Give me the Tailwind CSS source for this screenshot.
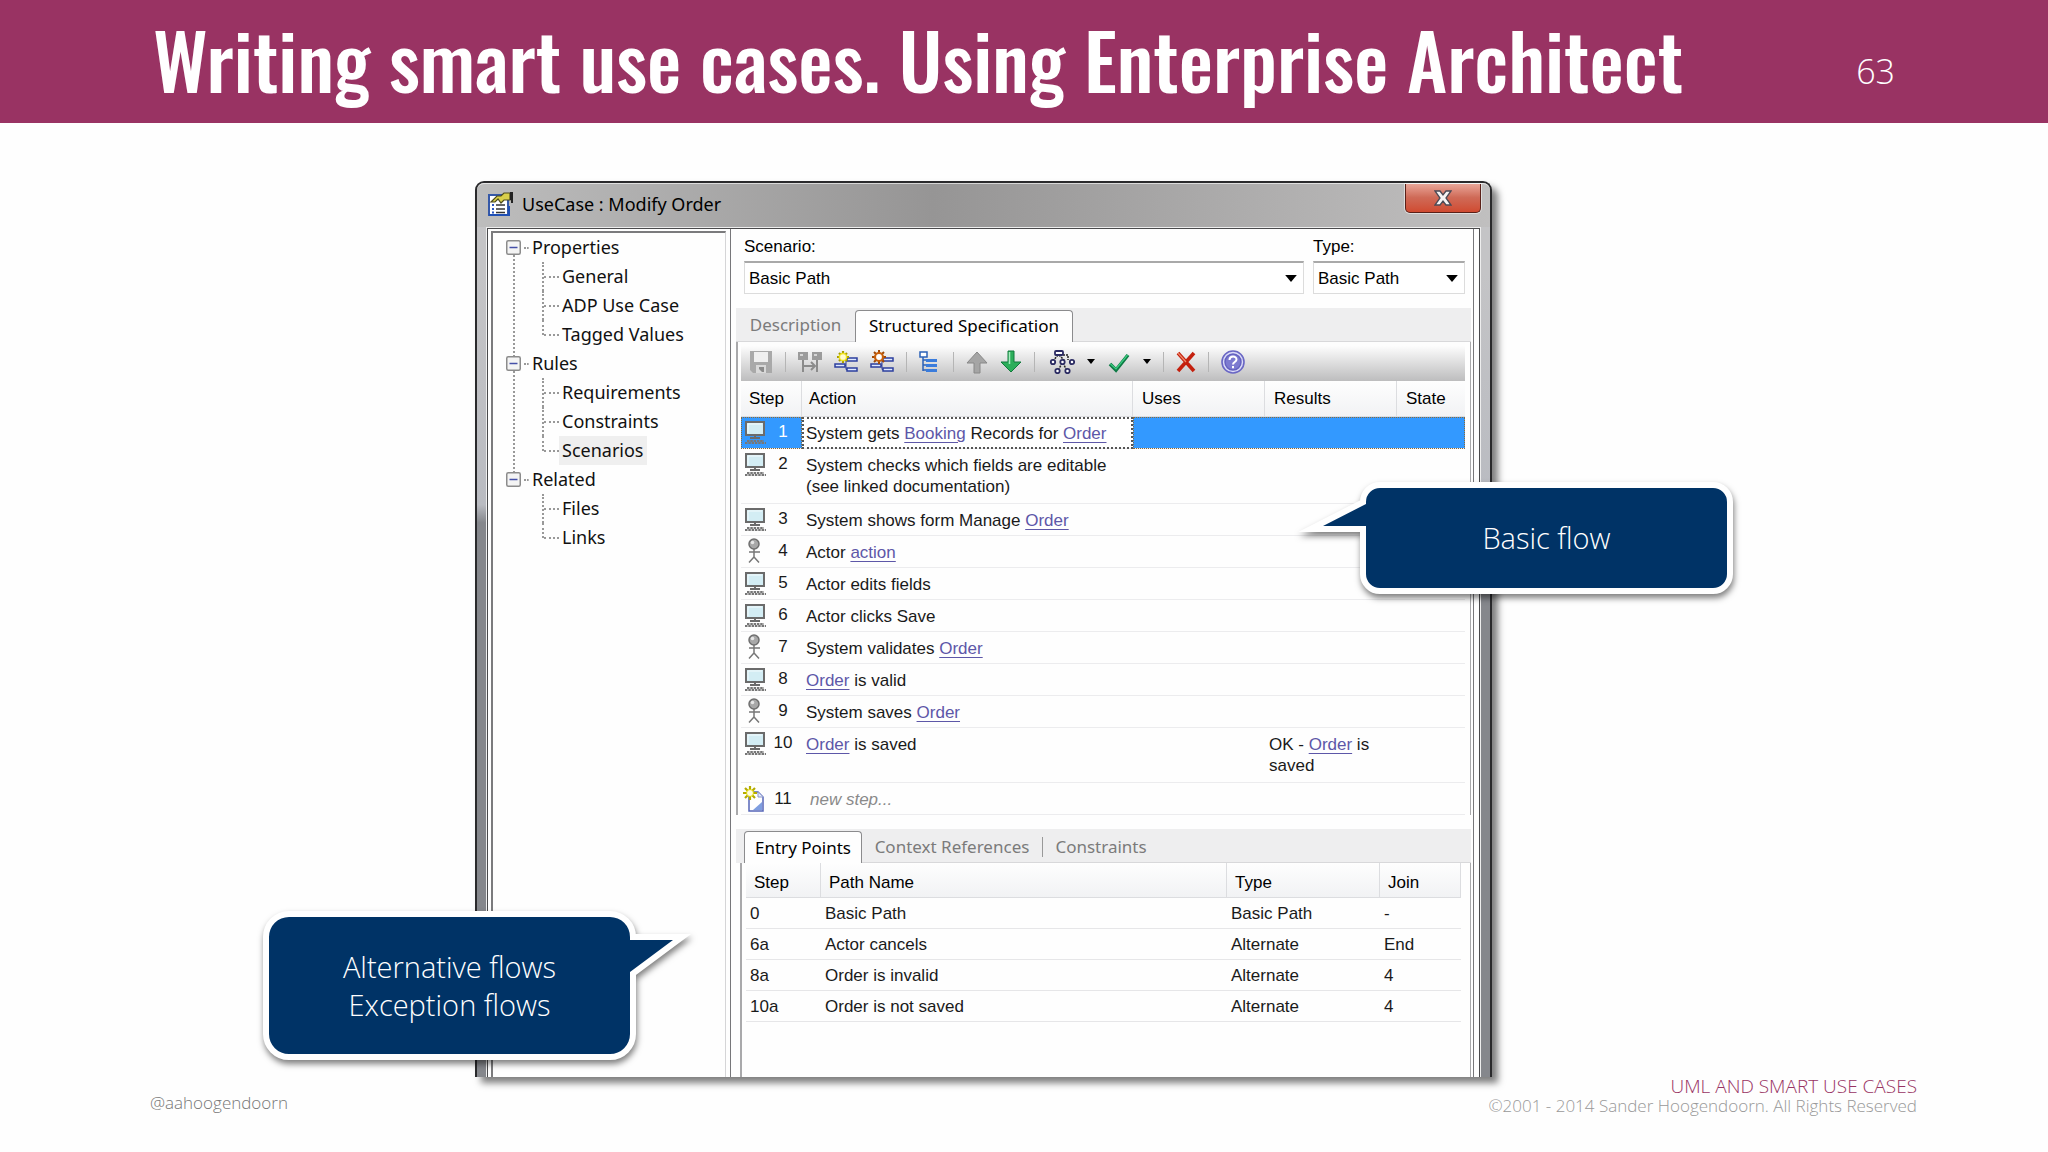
<!DOCTYPE html>
<html lang="en">
<head>
<meta charset="utf-8">
<title>Writing smart use cases. Using Enterprise Architect</title>
<script src="https://cdn.jsdelivr.net/npm/@tailwindcss/browser@4"></script>
</head>
<body class="min-h-screen flex flex-col bg-[#fefefe] overflow-x-hidden">

<!-- Shared icons -->
<svg class="hidden">
  <symbol id="pc" viewBox="0 0 22 23">
    <rect x="2" y="1" width="18" height="13" fill="#d3edf4" stroke="#6b6b6b" stroke-width="2"/>
    <path d="M4 12V3H18" fill="none" stroke="#f4fbfd"/>
    <path d="M11 15v2M6 17h10" stroke="#6b6b6b" stroke-width="2"/>
    <path d="M3 20h17M1 22h21" stroke="#777" stroke-width="1.800" stroke-dasharray="2.500 .8"/>
  </symbol>
  <symbol id="actor" viewBox="0 0 22 25">
    <path d="M10 11v8L5 24.500M10 19l5 5.500M5 14h11" fill="none" stroke="#777" stroke-width="1.500"/>
    <circle cx="10" cy="6" r="5" fill="#a8a8a8" stroke="#6f6f6f" stroke-width="1.500"/>
    <circle cx="8.500" cy="4.500" r="1.800" fill="#e6e6e6"/>
  </symbol>
  <symbol id="down" viewBox="0 0 10 6"><path d="M0 0h10L5 6z" fill="#000"/></symbol>
  <symbol id="plusminus" viewBox="0 0 15 15">
    <rect x=".75" y=".75" width="13.500" height="13.500" rx="1.500" fill="#f4f4f4" stroke="#8c8c8c" stroke-width="1.500"/>
    <path d="M3.500 7.500h8" stroke="#4550a8" stroke-width="1.500"/>
  </symbol>
</svg>

<header class="flex items-center justify-between bg-[#993363] h-[123px] pl-[153px] pr-[153px] text-white">
  <h1 class="pb-2 text-[77px] leading-[90px] font-medium whitespace-nowrap font-['Oswald','Roboto_Condensed','Open_Sans_Condensed','Liberation_Sans_Narrow','Open_Sans',sans-serif]">Writing smart use cases. Using Enterprise Architect</h1>
  <span class="pt-5 text-[34px] font-light font-['Open_Sans',sans-serif]">63</span>
</header>

<main class="grow grid grid-cols-[475fr_1017fr_556fr] pt-[58px] font-['Liberation_Sans',Arial,sans-serif] text-[17px] leading-[21px] text-[#1a1a1a]">
  <div class="col-start-2 relative flex flex-col border-2 border-b-0 border-[#2a2a2c] rounded-t-[9px] shadow-[6px_6px_7px_rgba(0,0,0,0.5)] bg-linear-to-b from-[#c4c4c6] from-10% via-[#b9bbc1] via-36% to-[#85878c] to-38%">

    <!-- Title bar -->
    <div class="flex items-start justify-between h-[44px] shrink-0 rounded-t-[7px] border-t border-white/60 bg-linear-to-r from-[#bdbdbd] via-[#969595] via-45% to-[#c0bfbf]">
      <div class="flex items-center gap-2 pl-[11px] pt-[8px]">
        <svg class="w-[26px] h-[24px]" viewBox="0 0 26 24">
          <rect x="1" y="3" width="19" height="20" fill="#fff" stroke="#3558a8" stroke-width="2"/>
          <path d="M1 23h20V14" fill="none" stroke="#1f4fb4" stroke-width="2"/>
          <path d="M4 13h2M4 17h2M4 20.500h2" stroke="#2b56c0" stroke-width="2"/>
          <path d="M8 13h9M8 17h9M8 20.500h9" stroke="#333" stroke-width="1.500"/>
          <path d="M3 10l6-6h4l3-3h6v7h-6l-3 3-3-4-3 3z" fill="#d9cf4a" stroke="#4d4a1a" stroke-width="1.200"/>
          <path d="M22 0h3v11h-2V8h-1z" fill="#222"/>
        </svg>
        <span class="text-[18px] leading-6 text-black font-['Noto_Sans','Open_Sans',sans-serif]">UseCase : Modify Order</span>
      </div>
      <button aria-label="Close" class="mr-[9px] w-[76px] h-[29px] flex items-center justify-center rounded-b-[5px] border border-t-0 border-[#5a2018] shadow-[0_0_0_1px_rgba(255,255,255,0.5)] bg-linear-to-b from-[#e8a598] via-[#cf6a57] via-48% to-[#d04a30]">
        <svg class="w-[18px] h-[16px]" viewBox="0 0 18 16"><path d="M1 1h5l3 4 3-4h5l-5 7 5 7h-5l-3-4-3 4H1l5-7z" fill="#f6f4f4" stroke="#4c4a55" stroke-width="1.300"/></svg>
      </button>
    </div>

    <!-- Client area -->
    <div class="grow mx-[9px] border border-b-0 border-[#eee]">
      <div class="h-full flex border border-b-0 border-[#4a4a4c] bg-[#fefefe] pl-[3px]">

        <nav class="w-[235px] mr-[2px] shrink-0 mt-0.5 border-l-2 border-t-2 border-r border-[#7b7b7d] border-r-[#d5d5d7] text-[18px] leading-[29px] text-[#111] font-['Noto_Sans','Open_Sans',sans-serif]">
          <ul class="relative pl-[13px]">
            <li aria-hidden="true" class="absolute left-[20px] top-[22px] h-[218px] border-l-2 border-dotted border-[#999]"></li>
            <li class="relative">
              <div class="flex items-center gap-[3px]"><svg class="w-[15px] h-[15px]"><use href="#plusminus"/></svg><span class="w-[5px] border-t-2 border-dotted border-[#999]"></span><span>Properties</span></div>
              <ul class="pl-[36px]">
                <li class="flex items-stretch"><span class="w-px border-l-2 border-dotted border-[#999]"></span><span class="w-[15px] self-center border-t-2 border-dotted border-[#999]"></span><span class="px-[3px]">General</span></li>
                <li class="flex items-stretch"><span class="w-px border-l-2 border-dotted border-[#999]"></span><span class="w-[15px] self-center border-t-2 border-dotted border-[#999]"></span><span class="px-[3px]">ADP Use Case</span></li>
                <li class="flex items-stretch"><span class="w-px h-[15px] border-l-2 border-dotted border-[#999]"></span><span class="w-[15px] self-center border-t-2 border-dotted border-[#999]"></span><span class="px-[3px]">Tagged Values</span></li>
              </ul>
            </li>
            <li class="relative">
              <div class="flex items-center gap-[3px]"><svg class="w-[15px] h-[15px]"><use href="#plusminus"/></svg><span class="w-[5px] border-t-2 border-dotted border-[#999]"></span><span>Rules</span></div>
              <ul class="pl-[36px]">
                <li class="flex items-stretch"><span class="w-px border-l-2 border-dotted border-[#999]"></span><span class="w-[15px] self-center border-t-2 border-dotted border-[#999]"></span><span class="px-[3px]">Requirements</span></li>
                <li class="flex items-stretch"><span class="w-px border-l-2 border-dotted border-[#999]"></span><span class="w-[15px] self-center border-t-2 border-dotted border-[#999]"></span><span class="px-[3px]">Constraints</span></li>
                <li class="flex items-stretch"><span class="w-px h-[15px] border-l-2 border-dotted border-[#999]"></span><span class="w-[15px] self-center border-t-2 border-dotted border-[#999]"></span><span class="px-[3px] bg-[#efefef]">Scenarios</span></li>
              </ul>
            </li>
            <li class="relative">
              <div class="flex items-center gap-[3px]"><svg class="w-[15px] h-[15px]"><use href="#plusminus"/></svg><span class="w-[5px] border-t-2 border-dotted border-[#999]"></span><span>Related</span></div>
              <ul class="pl-[36px]">
                <li class="flex items-stretch"><span class="w-px border-l-2 border-dotted border-[#999]"></span><span class="w-[15px] self-center border-t-2 border-dotted border-[#999]"></span><span class="px-[3px]">Files</span></li>
                <li class="flex items-stretch"><span class="w-px h-[15px] border-l-2 border-dotted border-[#999]"></span><span class="w-[15px] self-center border-t-2 border-dotted border-[#999]"></span><span class="px-[3px]">Links</span></li>
              </ul>
            </li>
          </ul>
        </nav>

        <section class="grow min-w-0 ml-[2px] mr-[5px] flex flex-col border-x border-[#77777a] pl-[5px] pr-[2px]">
          <div class="flex gap-[9px] pl-[8px] pr-[6px] pt-[7px] text-black">
            <div class="grow flex flex-col gap-[4px]">
              <label for="scenario">Scenario:</label>
              <div class="relative">
                <select id="scenario" class="appearance-none block w-full h-[33px] pl-[4px] border border-[#dcdcdc] border-t-2 border-t-[#a9a9a9] bg-white"><option>Basic Path</option></select>
                <svg class="absolute right-[7px] top-[14px] w-[12px] h-[7px] pointer-events-none"><use href="#down"/></svg>
              </div>
            </div>
            <div class="w-[152px] flex flex-col gap-[4px]">
              <label for="type">Type:</label>
              <div class="relative">
                <select id="type" class="appearance-none block w-full h-[33px] pl-[4px] border border-[#dcdcdc] border-t-2 border-t-[#a9a9a9] bg-white"><option>Basic Path</option></select>
                <svg class="absolute right-[7px] top-[14px] w-[12px] h-[7px] pointer-events-none"><use href="#down"/></svg>
              </div>
            </div>
          </div>

          <!-- Specification tabs -->
          <div class="mt-[14px] h-[34px] flex items-end bg-[#eeeeef] font-['Noto_Sans','Open_Sans',sans-serif] text-[17px]">
            <button class="h-full w-[119px] text-[#7b7b7b] border-b border-[#d8d8da]">Description</button>
            <button class="h-[32px] w-[218px] pb-0.5 rounded-t-[4px] border border-b-0 border-[#8b8b8d] bg-[#fefefe] text-black whitespace-nowrap">Structured Specification</button>
            <span class="grow border-b border-[#d8d8da]"></span>
          </div>

          <div class="border-l-2 border-r border-[#a9a9ab] pl-[3px] pr-[5px]">
            <div role="toolbar" class="flex items-center gap-3 h-[39px] pl-[8px] bg-linear-to-b from-[#fdfdfd] from-10% to-[#bdbdbe]">
              <button aria-label="Save"><svg class="w-6 h-6" viewBox="0 0 24 24"><path d="M1 1h22v22H4l-3-3z" fill="#a9a9a9"/><rect x="5" y="2" width="14" height="10" fill="#efefef"/><rect x="7" y="15" width="10" height="8" fill="#d9d9d9"/><path d="M10 17h5v5h-2l-3-3z" fill="#8b8b8b"/></svg></button>
              <span class="w-px h-5 bg-[#b5b5b5]"></span>
              <button aria-label="Split"><svg class="w-6 h-6" viewBox="0 0 24 24"><path d="M0 2h10v8H0zM14 2h10v8H14z" fill="#9b9b9b"/><path d="M2 4h3v2H2zM16 4h3v2h-3z" fill="#d5d5d5"/><path d="M5 10v12M19 10v12M5 16h12M13 12l4 4-4 4" fill="none" stroke="#8b8b8b" stroke-width="2"/></svg></button>
              <button aria-label="Insert step"><svg class="w-6 h-6" viewBox="0 0 24 24"><path d="M1 14h10v3H1zM13 8h10v3H13zM13 18h10v3H13z" fill="#dfe9ff" stroke="#2d3f9e" stroke-width="1.500"/><path d="M11 15.500h1v4h1M11 15.500h1v-6h1" fill="none" stroke="#2d3f9e"/><path d="M9 1v12M3 7h12M5 3l8 8M13 3l-8 8" stroke="#a89d00" stroke-width="2.200"/><circle cx="9" cy="7" r="3.600" fill="#fffbd0" stroke="#efe320" stroke-width="1.500"/></svg></button>
              <button aria-label="Edit step"><svg class="w-6 h-6" viewBox="0 0 24 24"><path d="M1 14h10v3H1zM13 8h10v3H13zM13 18h10v3H13z" fill="#dfe9ff" stroke="#2d3f9e" stroke-width="1.500"/><path d="M11 15.500h1v4h1M11 15.500h1v-6h1" fill="none" stroke="#2d3f9e"/><path d="M9 0v14M2 7h14M4 2l10 10M14 2L4 12" stroke="#a04a08" stroke-width="2"/><circle cx="9" cy="7" r="4" fill="#fff" stroke="#c8600c" stroke-width="2.200"/></svg></button>
              <span class="w-px h-5 bg-[#b5b5b5]"></span>
              <button aria-label="Outline"><svg class="w-[22px] h-6" viewBox="0 0 22 24"><path d="M4 7v14M4 10h3M4 15h3M4 20h3" fill="none" stroke="#2b62b8" stroke-width="1.500"/><rect x="1" y="2" width="7" height="5" fill="#fff" stroke="#2b62b8" stroke-width="1.500"/><path d="M7 9h11v3H7zM7 14h11v3H7zM7 19h11v3H7z" fill="#3a7cdc"/></svg></button>
              <span class="w-px h-5 bg-[#b5b5b5]"></span>
              <button aria-label="Move up"><svg class="w-[22px] h-6" viewBox="0 0 22 24"><path d="M11 2l10 11h-7v10H8V13H1z" fill="#a5a5a5" stroke="#888"/></svg></button>
              <button aria-label="Move down"><svg class="w-[22px] h-6" viewBox="0 0 22 24"><path d="M11 22L1 12h7V1h6v11h7z" fill="#2cae5a" stroke="#117a3c"/><path d="M9.500 2v12" stroke="#a8ecc0" stroke-width="1.500"/></svg></button>
              <span class="w-px h-5 bg-[#b5b5b5]"></span>
              <button aria-label="Structure"><svg class="w-[28px] h-6" viewBox="0 0 28 24"><path d="M12 5l6 6M11 5l-5 6M16 5h5v5M15 13l-4 8M16 13l4 8" fill="none" stroke="#222" stroke-width="1.500" stroke-dasharray="2 1"/><g fill="#fff" stroke="#2b2b62" stroke-width="1.800"><rect x="8" y="1" width="8" height="4" rx="1"/><circle cx="6" cy="12" r="2.200"/><circle cx="15.500" cy="12" r="2.200"/><circle cx="25" cy="12" r="2.200"/><circle cx="10.500" cy="21" r="2.200"/><circle cx="20.500" cy="21" r="2.200"/></g></svg></button>
              <svg class="w-2 h-[5px]"><use href="#down"/></svg>
              <button aria-label="Validate"><svg class="w-6 h-6" viewBox="0 0 24 24"><path d="M3 14l6 6L21 5" fill="none" stroke="#0e7a45" stroke-width="3.600"/><path d="M3.500 14l5.500 5L20.500 5" fill="none" stroke="#3ccf82" stroke-width="1.200"/></svg></button>
              <svg class="w-2 h-[5px]"><use href="#down"/></svg>
              <span class="w-px h-5 bg-[#b5b5b5]"></span>
              <button aria-label="Delete"><svg class="w-5 h-6" viewBox="0 0 20 24"><path d="M2 3l16 18M18 3L2 21" stroke="#c4200e" stroke-width="3.600"/><path d="M2 3l8 9" stroke="#f08a6a" stroke-width="1.200"/></svg></button>
              <span class="w-px h-5 bg-[#b5b5b5]"></span>
              <button aria-label="Help"><svg class="w-6 h-6" viewBox="0 0 24 24"><circle cx="12" cy="12" r="11" fill="#dcdcf8" stroke="#6a67c4" stroke-width="1.600"/><circle cx="12" cy="12" r="8" fill="#7d7bd0" stroke="#6462c0" stroke-width="1.500"/><path d="M8.500 10c0-4.500 7-4.500 7-.5 0 2.500-3.500 2.500-3.500 5M12 16v2.200" fill="none" stroke="#fff" stroke-width="2"/></svg></button>
            </div>

            <table class="w-full table-fixed border-separate border-spacing-0 text-left">
              <thead>
                <tr class="h-[36px] text-black bg-linear-to-b from-[#fefefe] to-[#f1f2f4]">
                  <th class="w-[61px] pl-2 font-normal border-b border-r border-[#dcdde0]">Step</th>
                  <th class="pl-[7px] font-normal border-b border-r border-[#dcdde0]">Action</th>
                  <th class="w-[132px] pl-[9px] font-normal border-b border-r border-[#dcdde0]">Uses</th>
                  <th class="w-[132px] pl-[9px] font-normal border-b border-r border-[#dcdde0]">Results</th>
                  <th class="w-[68px] pl-[9px] font-normal border-b border-[#dcdde0]">State</th>
                </tr>
              </thead>
              <tbody class="align-top [&_a]:text-[#5d57a8] [&_a]:underline [&_a]:underline-offset-3 [&_td]:border-b [&_td]:border-[#ececee]">
                <tr class="h-[32px]">
                  <td class="bg-[#3399ff] pl-[3px] pt-[4px] outline-1 outline-dotted outline-[#8a6a3a] -outline-offset-1"><div class="flex items-start text-white"><svg class="w-[22px] h-[23px]"><use href="#pc"/></svg><span class="w-[34px] text-center">1</span></div></td>
                  <td class="pl-[4px] pt-[6px] outline-2 outline-dotted outline-[#555] -outline-offset-2 bg-white">System gets <a href="#booking">Booking</a> Records for <a href="#order">Order</a></td>
                  <td class="bg-[#3399ff] outline-1 outline-dotted outline-[#8a6a3a] -outline-offset-1" colspan="3"></td>
                </tr>
                <tr class="h-[55px]">
                  <td class="pl-[3px] pt-[4px]"><div class="flex items-start"><svg class="w-[22px] h-[23px]"><use href="#pc"/></svg><span class="w-[34px] text-center">2</span></div></td>
                  <td class="pl-[4px] pt-[6px]">System checks which fields are editable<br>(see linked documentation)</td><td></td><td></td><td></td>
                </tr>
                <tr class="h-[32px]">
                  <td class="pl-[3px] pt-[4px]"><div class="flex items-start"><svg class="w-[22px] h-[23px]"><use href="#pc"/></svg><span class="w-[34px] text-center">3</span></div></td>
                  <td class="pl-[4px] pt-[6px]">System shows form Manage <a href="#order">Order</a></td><td></td><td></td><td></td>
                </tr>
                <tr class="h-[32px]">
                  <td class="pl-[3px] pt-[2px]"><div class="flex items-start"><svg class="w-[22px] h-[25px]"><use href="#actor"/></svg><span class="w-[34px] pt-[2px] text-center">4</span></div></td>
                  <td class="pl-[4px] pt-[6px]">Actor <a href="#action">action</a></td><td></td><td></td><td></td>
                </tr>
                <tr class="h-[32px]">
                  <td class="pl-[3px] pt-[4px]"><div class="flex items-start"><svg class="w-[22px] h-[23px]"><use href="#pc"/></svg><span class="w-[34px] text-center">5</span></div></td>
                  <td class="pl-[4px] pt-[6px]">Actor edits fields</td><td></td><td></td><td></td>
                </tr>
                <tr class="h-[32px]">
                  <td class="pl-[3px] pt-[4px]"><div class="flex items-start"><svg class="w-[22px] h-[23px]"><use href="#pc"/></svg><span class="w-[34px] text-center">6</span></div></td>
                  <td class="pl-[4px] pt-[6px]">Actor clicks Save</td><td></td><td></td><td></td>
                </tr>
                <tr class="h-[32px]">
                  <td class="pl-[3px] pt-[2px]"><div class="flex items-start"><svg class="w-[22px] h-[25px]"><use href="#actor"/></svg><span class="w-[34px] pt-[2px] text-center">7</span></div></td>
                  <td class="pl-[4px] pt-[6px]">System validates <a href="#order">Order</a></td><td></td><td></td><td></td>
                </tr>
                <tr class="h-[32px]">
                  <td class="pl-[3px] pt-[4px]"><div class="flex items-start"><svg class="w-[22px] h-[23px]"><use href="#pc"/></svg><span class="w-[34px] text-center">8</span></div></td>
                  <td class="pl-[4px] pt-[6px]"><a href="#order">Order</a> is valid</td><td></td><td></td><td></td>
                </tr>
                <tr class="h-[32px]">
                  <td class="pl-[3px] pt-[2px]"><div class="flex items-start"><svg class="w-[22px] h-[25px]"><use href="#actor"/></svg><span class="w-[34px] pt-[2px] text-center">9</span></div></td>
                  <td class="pl-[4px] pt-[6px]">System saves <a href="#order">Order</a></td><td></td><td></td><td></td>
                </tr>
                <tr class="h-[55px]">
                  <td class="pl-[3px] pt-[4px]"><div class="flex items-start"><svg class="w-[22px] h-[23px]"><use href="#pc"/></svg><span class="w-[34px] text-center">10</span></div></td>
                  <td class="pl-[4px] pt-[6px]"><a href="#order">Order</a> is saved</td><td></td>
                  <td class="pl-[4px] pt-[6px]">OK - <a href="#order">Order</a> is<br>saved</td><td></td>
                </tr>
                <tr class="h-[32px]">
                  <td class="pl-[2px] pt-[3px]"><div class="flex items-start"><svg class="w-[23px] h-[26px]" viewBox="0 0 23 26"><path d="M6 6h9l5 5v14H6z" fill="#fff" stroke="#5566b8" stroke-width="1.500"/><path d="M19 16v8h-9z" fill="#7f9ee0"/><path d="M15 6v5h5" fill="#e6ebfa" stroke="#8a95c8"/><path d="M7 0v14M0 7h14M2 2l10 10M12 2L2 12" stroke="#b4ac00" stroke-width="2.200"/><circle cx="7" cy="7" r="3.500" fill="#fffde0" stroke="#ded600"/></svg><span class="w-[34px] pt-[2px] text-center">11</span></div></td>
                  <td class="pl-[8px] pt-[6px] italic text-[#8a8a8a]">new step...</td><td></td><td></td><td></td>
                </tr>
              </tbody>
            </table>
          </div>

          <!-- Entry point tabs -->
          <div class="mt-[14px] h-[34px] pl-[8px] flex items-end bg-[#eeeeef] font-['Noto_Sans','Open_Sans',sans-serif] text-[17px] text-[#7b7b7b]">
            <button class="h-[32px] w-[118px] rounded-t-[4px] border border-b-0 border-[#8b8b8d] bg-[#fefefe] text-black whitespace-nowrap">Entry Points</button>
            <div class="grow h-[32px] flex items-center border-b border-[#d8d8da]">
              <button class="w-[180px] whitespace-nowrap">Context References</button>
              <span class="w-px h-5 bg-[#999]"></span>
              <button class="w-[116px]">Constraints</button>
            </div>
          </div>
          <div class="grow ml-[4px] border-l-2 border-r border-[#a9a9ab] pl-[4px] pr-[9px] pb-[50px]">
            <table class="w-full table-fixed border-separate border-spacing-0 text-left [&_td]:border-b [&_td]:border-[#e6e6e8]">
              <thead>
                <tr class="h-[35px] text-black bg-linear-to-b from-[#fefefe] to-[#f1f2f4]">
                  <th class="w-[75px] pl-[8px] pt-[4px] font-normal border-b border-r border-[#dcdde0]">Step</th>
                  <th class="pl-[8px] pt-[4px] font-normal border-b border-r border-[#dcdde0]">Path Name</th>
                  <th class="w-[153px] pl-[8px] pt-[4px] font-normal border-b border-r border-[#dcdde0]">Type</th>
                  <th class="w-[81px] pl-[8px] pt-[4px] font-normal border-b border-r border-[#dcdde0]">Join</th>
                </tr>
              </thead>
              <tbody class="[&_td]:pl-[4px] [&_td]:pt-px">
                <tr class="h-[31px]"><td>0</td><td>Basic Path</td><td>Basic Path</td><td>-</td></tr>
                <tr class="h-[31px]"><td>6a</td><td>Actor cancels</td><td>Alternate</td><td>End</td></tr>
                <tr class="h-[31px]"><td>8a</td><td>Order is invalid</td><td>Alternate</td><td>4</td></tr>
                <tr class="h-[31px]"><td>10a</td><td>Order is not saved</td><td>Alternate</td><td>4</td></tr>
              </tbody>
            </table>
          </div>
        </section>
      </div>
    </div>

    <!-- Callouts over the window -->
    <aside class="absolute right-[-237px] top-[305px] w-[361px] h-[100px] flex items-center justify-center text-white text-[29px] leading-[38px] font-light font-['Open_Sans',sans-serif]">
      <svg class="absolute inset-0 overflow-visible drop-shadow-[1px_4px_3px_rgba(0,0,0,0.5)]" width="361" height="100"><path d="M14 0H347a14 14 0 0 1 14 14V86a14 14 0 0 1-14 14H14a14 14 0 0 1-14-14V38H-43L0 16V14a14 14 0 0 1 14-14z" fill="#003366" stroke="#fff" stroke-width="12" stroke-miterlimit="10" paint-order="stroke"/></svg>
      <span class="relative">Basic flow</span>
    </aside>
    <aside class="absolute left-[-208px] bottom-[23px] w-[361px] h-[137px] flex items-center justify-center text-center text-white text-[29px] leading-[38px] font-light font-['Open_Sans',sans-serif]">
      <svg class="absolute inset-0 overflow-visible drop-shadow-[1px_4px_3px_rgba(0,0,0,0.5)]" width="361" height="137"><path d="M20 0H341a20 20 0 0 1 20 20V23H404L361 55V117a20 20 0 0 1-20 20H20a20 20 0 0 1-20-20V20a20 20 0 0 1 20-20z" fill="#003366" stroke="#fff" stroke-width="12" stroke-miterlimit="10" paint-order="stroke"/></svg>
      <span class="relative">Alternative flows<br>Exception flows</span>
    </aside>
  </div>
</main>

<footer class="flex justify-between pl-[150px] pr-[131px] pb-[37px] font-['Open_Sans',sans-serif] font-light">
  <span class="pt-[14px] text-[17px] leading-6 text-[#777]">@aahoogendoorn</span>
  <div class="text-right leading-[19px]">
    <div class="text-[19px] leading-[19px] text-[#993363]">UML AND SMART USE CASES</div>
    <div class="text-[17px] text-[#999]">©2001 - 2014 Sander Hoogendoorn. All Rights Reserved</div>
  </div>
</footer>
</body>
</html>
